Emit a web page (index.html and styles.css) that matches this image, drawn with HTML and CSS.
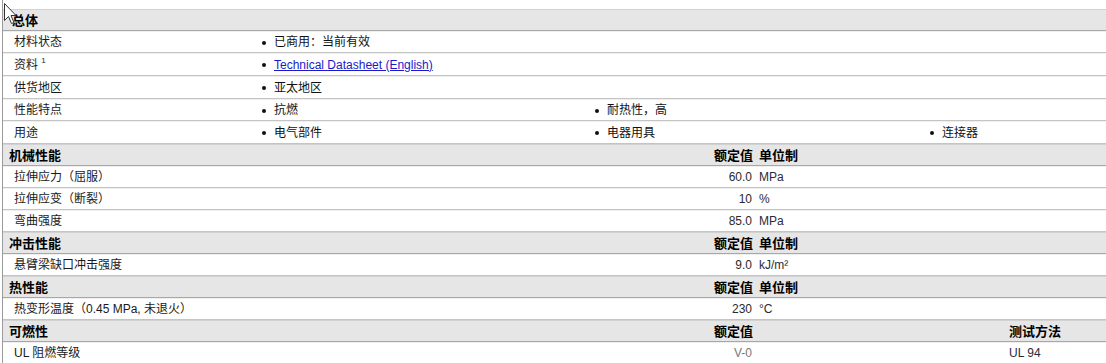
FILE: index.html
```html
<!DOCTYPE html>
<html lang="zh-CN">
<head>
<meta charset="utf-8">
<title>产品数据表</title>
<link rel="stylesheet" href="styles.css">
</head>
<body>
<div class="sheet">
  <div class="head"><span class="title">总体</span></div>
  <div class="row list"><span class="label">材料状态</span><span class="item">已商用：当前有效</span></div>
  <div class="row list tall"><span class="label">资料 <sup>1</sup></span><span class="item"><a href="#">Technical Datasheet (English)</a></span></div>
  <div class="row list tall"><span class="label">供货地区</span><span class="item">亚太地区</span></div>
  <div class="row list"><span class="label">性能特点</span><span class="item">抗燃</span><span class="item">耐热性，高</span></div>
  <div class="row list tall"><span class="label">用途</span><span class="item">电气部件</span><span class="item">电器用具</span><span class="item">连接器</span></div>

  <div class="head data"><span class="title">机械性能</span><span class="val">额定值</span><span class="unit">单位制</span></div>
  <div class="row data"><span class="label">拉伸应力（屈服）</span><span class="val">60.0</span><span class="unit">MPa</span></div>
  <div class="row data"><span class="label">拉伸应变（断裂）</span><span class="val">10</span><span class="unit">%</span></div>
  <div class="row data"><span class="label">弯曲强度</span><span class="val">85.0</span><span class="unit">MPa</span></div>

  <div class="head data"><span class="title">冲击性能</span><span class="val">额定值</span><span class="unit">单位制</span></div>
  <div class="row data"><span class="label">悬臂梁缺口冲击强度</span><span class="val">9.0</span><span class="unit">kJ/m²</span></div>

  <div class="head data"><span class="title">热性能</span><span class="val">额定值</span><span class="unit">单位制</span></div>
  <div class="row data"><span class="label">热变形温度（0.45 MPa, 未退火）</span><span class="val">230</span><span class="unit">°C</span></div>

  <div class="head data"><span class="title">可燃性</span><span class="val">额定值</span><span class="unit"></span><span class="method">测试方法</span></div>
  <div class="row data"><span class="label">UL 阻燃等级</span><span class="val light">V-0</span><span class="unit"></span><span class="method">UL 94</span></div>
</div>
<svg class="cursor" width="14" height="23" viewBox="0 0 14 23" aria-hidden="true">
  <path d="M1.5 1.5 L1.5 18.5 L5.5 14.5 L8.5 21.5 L11 20.5 L8 13.5 L13 13.5 Z" fill="#fff" stroke="#333" stroke-width="1"/>
</svg>
</body>
</html>
```

FILE: styles.css
```css
html, body {
  margin: 0;
  padding: 0;
  background: #fff;
}

body {
  font-family: "Liberation Sans", Arial, "Noto Sans CJK SC", sans-serif;
  font-size: 12px;
  color: #111;
  position: relative;
  height: 363px;
  overflow: hidden;
}

.sheet {
  margin-left: 2px;
  padding-top: 9px;
  border-left: 1px solid #9a9a9a;
  min-height: 400px;
}

.head,
.row {
  display: grid;
  align-items: center;
  box-sizing: border-box;
  white-space: nowrap;
}

.row {
  height: 22px;
  padding-top: 2px;
  line-height: 19px;
  border-bottom: 1px solid #c4c4c4;
  box-shadow: inset 0 1px 0 #efefef;
}

.row.tall {
  height: 23px;
}

.head {
  height: 22px;
  padding-top: 1px;
  line-height: 19px;
  background: #e6e6e6;
  border-top: 1px solid #d2d2d2;
  border-bottom: 1px solid #a8a8a8;
}

.head .title {
  padding-left: 6px;
  font-weight: bold;
  font-size: 13px;
  color: #000;
}

.head:first-child .title {
  padding-left: 9px;
}

.label {
  padding-left: 11px;
  color: #1a1a1a;
}

sup {
  font-size: 8px;
  line-height: 0;
  vertical-align: 6px;
}

/* list rows */
.list {
  grid-template-columns: 259px 333px 335px 1fr;
}

.item {
  display: flex;
  align-items: center;
  color: #111;
}

.item::before {
  content: "";
  width: 4px;
  height: 4px;
  border-radius: 50%;
  background: #111;
  margin-right: 8px;
  flex: none;
}

.item a {
  color: #1a1acc;
  text-decoration: underline;
}

/* data rows */
.data {
  grid-template-columns: 620px 129px 257px 1fr;
}

.data .val {
  text-align: right;
  color: #2a2a2a;
}

.data .unit {
  padding-left: 7px;
  color: #2a2a3a;
}

.data .method {
  color: #2a2a3a;
}

.head.data .val,
.head.data .unit,
.head.data .method {
  font-weight: bold;
  font-size: 13px;
  color: #000;
}

.head.data .val {
  margin-right: -1px;
}

.val.light {
  color: #777;
}

.cursor {
  position: absolute;
  left: 3px;
  top: 2px;
}
```
